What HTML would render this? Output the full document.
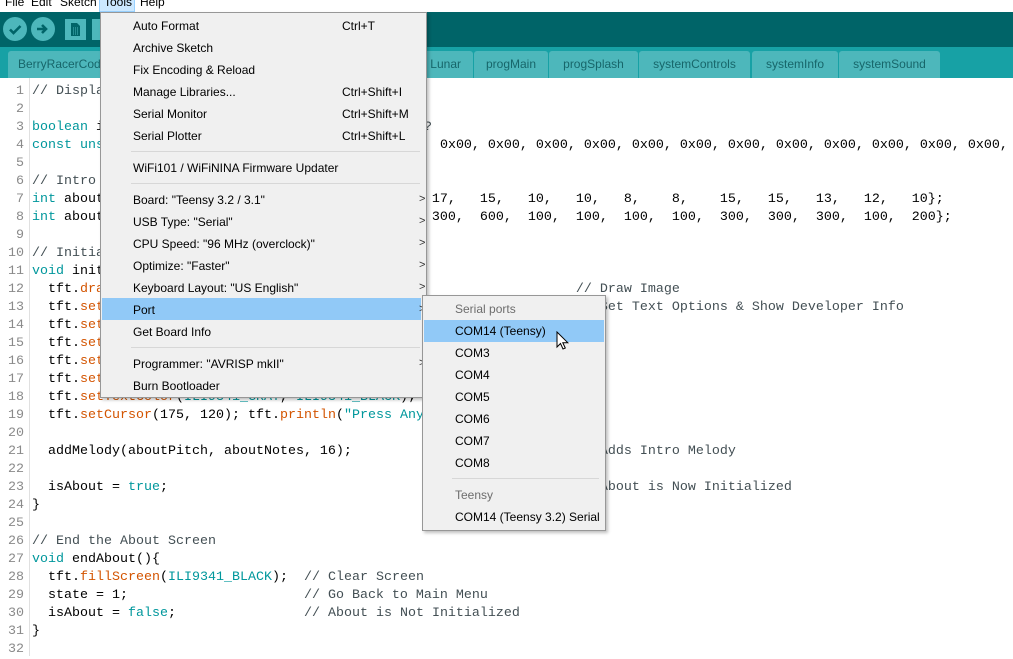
<!DOCTYPE html>
<html><head><meta charset="utf-8"><style>
*{margin:0;padding:0;box-sizing:border-box}
body{width:1013px;height:656px;overflow:hidden;background:#fff;position:relative;font-family:"Liberation Sans",sans-serif}
.a{position:absolute;white-space:pre}
.mb{font-size:12px;top:-5px;color:#000}
.code{font-family:"Liberation Mono",monospace;font-size:13.33px;line-height:18px;color:#000}
.k{color:#00979c}.f{color:#d35400}.c{color:#434f54}
.ln{position:absolute;left:0;width:24px;text-align:right;font-family:"Liberation Mono",monospace;font-size:13.33px;line-height:18px;color:#8a8a8a}
.tab{position:absolute;top:51px;height:27px;background:#4db7bb;border-radius:3px 3px 0 0;color:#17666a;font-size:12px;line-height:26px;text-align:center}
.menu{position:absolute;background:#f0f0f0;border:1px solid #979797;box-shadow:2px 2px 3px rgba(0,0,0,.25);font-size:12px}
.mi{position:absolute;left:32px;white-space:pre;color:#000}
.sc{position:absolute;left:209px}
.ar{position:absolute;left:286px;color:#333;font-size:11px}
.sep{position:absolute;left:30px;right:6px;height:1px;background:#d7d7d7}
.hl{position:absolute;background:#91c9f7}
</style></head><body>
<div class="a" style="left:0;top:0;width:1013px;height:12px;background:#fff"></div>
<div class="a" style="left:99px;top:-2px;width:36px;height:14px;background:#cce8ff;border:1px solid #99d1ff"></div>
<div class="a mb" style="left:5px">File</div>
<div class="a mb" style="left:31px">Edit</div>
<div class="a mb" style="left:60px">Sketch</div>
<div class="a mb" style="left:104px">Tools</div>
<div class="a mb" style="left:140px">Help</div>
<div class="a" style="left:0;top:12px;width:1013px;height:35px;background:#006468"></div>
<div class="a" style="left:3px;top:17px;width:24px;height:24px;border-radius:50%;background:#4db7bb"></div>
<svg class="a" style="left:3px;top:17px" width="24" height="24"><path d="M7 12.5l3.5 3.5 7-7" stroke="#006468" stroke-width="2.6" fill="none"/></svg>
<div class="a" style="left:31px;top:17px;width:24px;height:24px;border-radius:50%;background:#4db7bb"></div>
<svg class="a" style="left:31px;top:17px" width="24" height="24"><path d="M6 12h8M11 8l4 4-4 4" stroke="#006468" stroke-width="2.6" fill="none"/></svg>
<div class="a" style="left:65px;top:19px;width:21px;height:21px;background:#4db7bb"></div>
<svg class="a" style="left:65px;top:19px" width="21" height="21"><path d="M6 4h6l3 3v10H6z" fill="#006468"/><path d="M8 9h5M8 11h5M8 13h5M8 15h5" stroke="#4db7bb" stroke-width="1" stroke-dasharray="1 1"/></svg>
<div class="a" style="left:92px;top:19px;width:8px;height:21px;background:#4db7bb"></div>
<div class="a" style="left:0;top:47px;width:1013px;height:31px;background:#17a1a5"></div>
<div class="tab" style="left:8px;width:120px;text-align:left;padding-left:10px">BerryRacerCode</div>
<div class="tab" style="left:400px;width:73px;text-align:right;padding-right:12px">Lunar</div>
<div class="tab" style="left:474px;width:74px">progMain</div>
<div class="tab" style="left:549px;width:89px">progSplash</div>
<div class="tab" style="left:639px;width:111px">systemControls</div>
<div class="tab" style="left:752px;width:86px">systemInfo</div>
<div class="tab" style="left:839px;width:101px">systemSound</div>
<div class="a" style="left:29px;top:78px;width:1px;height:578px;background:#e0e0e0"></div>
<div class="ln" style="top:83px">1<br>2<br>3<br>4<br>5<br>6<br>7<br>8<br>9<br>10<br>11<br>12<br>13<br>14<br>15<br>16<br>17<br>18<br>19<br>20<br>21<br>22<br>23<br>24<br>25<br>26<br>27<br>28<br>29<br>30<br>31<br>32</div>
<div class="a code" style="left:32px;top:83px"><span class="c">// Display the About Screen</span>

<span class="k">boolean</span> isAboutShown = <span class="k">false</span>;                    <span class="c">?</span>
<span class="k">const</span> <span class="k">unsigned</span> <span class="k">char</span> aboutImg[] PROGMEM = {0x00,    0x00, 0x00, 0x00, 0x00, 0x00, 0x00, 0x00, 0x00, 0x00, 0x00, 0x00, 0x00, 0x00,

<span class="c">// Intro Melody Notes &amp; Durations</span>
<span class="k">int</span> aboutPitch[] = {20,  20,  20,  20,            17,   15,   10,   10,   8,    8,    15,   15,   13,   12,   10};
<span class="k">int</span> aboutNotes[] = {100, 100, 100, 100,           300,  600,  100,  100,  100,  100,  300,  300,  300,  100,  200};

<span class="c">// Initialize the About Screen</span>
<span class="k">void</span> initAbout(){
  tft.<span class="f">drawRGBBitmap</span>(0, 0, aboutImg, 320, 2<span class="k">ITE</span>);                     <span class="c">// Draw Image</span>
  tft.<span class="f">setTextSize</span>(1);                                               <span class="c">// Set Text Options &amp; Show Developer Info</span>
  tft.<span class="f">setTextColor</span>(ILI9341_WHITE);
  tft.<span class="f">setCursor</span>(10, 10);
  tft.<span class="f">setCursor</span>(10, 20);
  tft.<span class="f">setCursor</span>(10, 30);
  tft.<span class="f">setTextColor</span>(<span class="k">ILI9341_GRAY</span>, <span class="k">ILI9341_BLACK</span>);
  tft.<span class="f">setCursor</span>(175, 120); tft.<span class="f">println</span>(<span class="k">"Press Any Key"</span>);

  addMelody(aboutPitch, aboutNotes, 16);                            <span class="c">// Adds Intro Melody</span>

  isAbout = <span class="k">true</span>;                                                   <span class="c">// About is Now Initialized</span>
}

<span class="c">// End the About Screen</span>
<span class="k">void</span> endAbout(){
  tft.<span class="f">fillScreen</span>(<span class="k">ILI9341_BLACK</span>);  <span class="c">// Clear Screen</span>
  state = 1;                      <span class="c">// Go Back to Main Menu</span>
  isAbout = <span class="k">false</span>;                <span class="c">// About is Not Initialized</span>
}
</div>
<div class="menu" style="left:100px;top:12px;width:327px;height:386px">
<div class="mi" style="top:6px">Auto Format<span class="sc">Ctrl+T</span></div>
<div class="mi" style="top:28px">Archive Sketch</div>
<div class="mi" style="top:50px">Fix Encoding &amp; Reload</div>
<div class="mi" style="top:72px">Manage Libraries...<span class="sc">Ctrl+Shift+I</span></div>
<div class="mi" style="top:94px">Serial Monitor<span class="sc">Ctrl+Shift+M</span></div>
<div class="mi" style="top:116px">Serial Plotter<span class="sc">Ctrl+Shift+L</span></div>
<div class="sep" style="top:138px"></div>
<div class="mi" style="top:148px">WiFi101 / WiFiNINA Firmware Updater</div>
<div class="sep" style="top:170px"></div>
<div class="hl" style="left:1px;top:285px;width:319px;height:22px"></div>
<div class="mi" style="top:180px">Board: "Teensy 3.2 / 3.1"<span class="ar">&gt;</span></div>
<div class="mi" style="top:202px">USB Type: "Serial"<span class="ar">&gt;</span></div>
<div class="mi" style="top:224px">CPU Speed: "96 MHz (overclock)"<span class="ar">&gt;</span></div>
<div class="mi" style="top:246px">Optimize: "Faster"<span class="ar">&gt;</span></div>
<div class="mi" style="top:268px">Keyboard Layout: "US English"<span class="ar">&gt;</span></div>
<div class="mi" style="top:290px">Port<span class="ar">&gt;</span></div>
<div class="mi" style="top:312px">Get Board Info</div>
<div class="sep" style="top:334px"></div>
<div class="mi" style="top:344px">Programmer: "AVRISP mkII"<span class="ar">&gt;</span></div>
<div class="mi" style="top:366px">Burn Bootloader</div>
</div>
<div class="menu" style="left:422px;top:295px;width:184px;height:236px">
<div class="hl" style="left:1px;top:24px;width:180px;height:22px"></div>
<div class="mi" style="top:6px;color:#6d6d6d">Serial ports</div>
<div class="mi" style="top:28px">COM14 (Teensy)</div>
<div class="mi" style="top:50px">COM3</div>
<div class="mi" style="top:72px">COM4</div>
<div class="mi" style="top:94px">COM5</div>
<div class="mi" style="top:116px">COM6</div>
<div class="mi" style="top:138px">COM7</div>
<div class="mi" style="top:160px">COM8</div>
<div class="sep" style="top:182px;left:29px"></div>
<div class="mi" style="top:192px;color:#6d6d6d">Teensy</div>
<div class="mi" style="top:214px">COM14 (Teensy 3.2) Serial</div>
</div>
<svg class="a" style="left:556px;top:331px" width="14" height="20"><path d="M1 1v15l3.5-3.5 2.5 5.5 2.3-1-2.5-5.3h5z" fill="#fff" stroke="#000" stroke-width="1"/></svg>
</body></html>
